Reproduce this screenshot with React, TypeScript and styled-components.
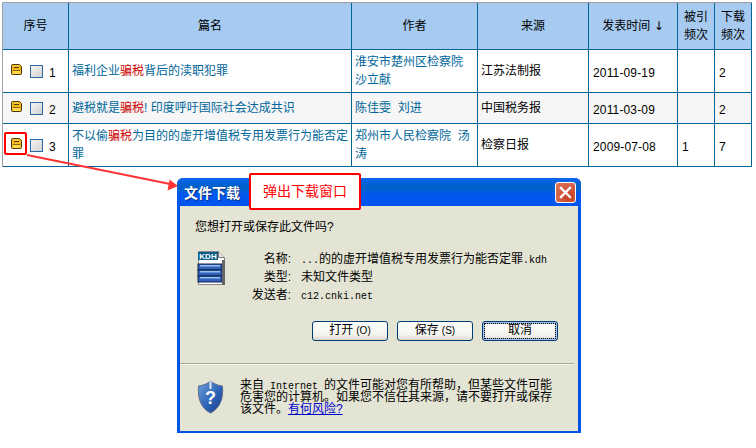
import styled, { createGlobalStyle } from "styled-components";

const GlobalStyle = createGlobalStyle`
  html, body {
    margin: 0;
    padding: 0;
    background: #fff;
  }
`;

const cjk = `"Liberation Sans", "Noto Sans CJK SC", sans-serif`;
const lineBlue = "#006699";

const Page = styled.div`
  position: relative;
  width: 756px;
  height: 448px;
  overflow: hidden;
  padding: 2px 0 0 2px;
  box-sizing: border-box;
  font-family: ${cjk};
  font-size: 12px;
  color: #000;
`;

const ResultTable = styled.table`
  width: 750px;
  table-layout: fixed;
  border-collapse: separate;
  border-spacing: 0;
  border-top: 1px solid #a0a0a0;
  border-left: 1px solid #a0a0a0;
`;

const HeadCell = styled.th`
  height: 46px;
  padding: 0 3px;
  background: #a6caf0;
  font-weight: normal;
  line-height: 18px;
  text-align: center;
  border-right: 1px solid ${lineBlue};
  border-bottom: 1px solid ${lineBlue};
`;

const SortArrow = styled.span`
  font-family: "DejaVu Sans", sans-serif;
  font-size: 12px;
`;

const Row = styled.tr<{ $shade?: boolean; $height: number }>`
  height: ${(p) => p.$height}px;
  background: ${(p) => (p.$shade ? "#f6f6f6" : "#fff")};
`;

const Cell = styled.td`
  padding: 0 2px 0 3px;
  line-height: 18px;
  vertical-align: middle;
  word-break: break-all;
  border-right: 1px solid ${lineBlue};
  border-bottom: 1px solid ${lineBlue};
`;

const TextLink = styled.a`
  color: ${lineBlue};
  text-decoration: none;
`;

const Hit = styled.em`
  color: #cc0000;
  font-style: normal;
`;

const NumCell = styled(Cell)`
  padding: 3px 0 0 4px;
  letter-spacing: 0.15px;
`;

const SeqBox = styled.div`
  display: flex;
  align-items: center;
  padding-left: 5px;
`;

const Floppy = styled.svg`
  display: block;
  width: 11px;
  height: 11px;
  margin-top: -3px;
  flex: none;
`;

const Check = styled.span`
  display: block;
  width: 11px;
  height: 11px;
  margin-left: 8px;
  border: 1px solid #2a6aa8;
  background: linear-gradient(135deg, #f6f6f6, #d0d0d0);
  flex: none;
`;

const SeqNum = styled.span`
  margin-left: 6px;
  padding-top: 3px;
`;

const Dialog = styled.div`
  width: 404px;
  height: 255px;
  margin: 11px 0 0 175px;
  box-sizing: border-box;
  display: flex;
  flex-direction: column;
  border-radius: 6px 6px 0 0;
  background: #0055e5;
  padding: 0 3px 2px;
`;

const TitleBar = styled.div`
  flex: none;
  height: 28px;
  margin: 0 -3px;
  padding: 0 5px 0 7px;
  display: flex;
  align-items: center;
  justify-content: space-between;
  border-radius: 6px 6px 0 0;
  background: linear-gradient(180deg, #0a66f0 0, #0a62e0 4px, #0060c8 8px, #0062d0 12px, #0058ee 16px, #0055ee 100%);
`;

const TitleText = styled.span`
  color: #fff;
  font-size: 14px;
  font-weight: bold;
  text-shadow: 1px 1px 0 #0a2a80;
`;

const CloseButton = styled.div`
  width: 19px;
  height: 19px;
  border: 1px solid #fff;
  border-radius: 3px;
  background: radial-gradient(circle at 70% 70%, #c23c1c, #d9694f 70%, #e27a60);
  display: flex;
  align-items: center;
  justify-content: center;
`;

const Body = styled.div`
  flex: 1;
  background: #e4e4d4;
  display: flex;
  flex-direction: column;
`;

const Prompt = styled.div`
  padding: 14px 0 0 15px;
  line-height: 14px;
`;

const Mono = styled.span`
  font-family: "Liberation Mono", monospace;
  font-size: 10px;
  line-height: 0;
`;

const FileBlock = styled.div`
  display: flex;
  padding: 17px 0 0 17px;
`;

const FileIcon = styled.svg`
  display: block;
  width: 29px;
  height: 34px;
  flex: none;
`;

const FieldGrid = styled.div`
  display: grid;
  grid-template-columns: 65px auto;
  grid-auto-rows: 18px;
  column-gap: 10px;
  margin: -1px 0 0 0;
  line-height: 18px;
`;

const FieldName = styled.span`
  text-align: right;
`;

const Buttons = styled.div`
  display: flex;
  gap: 9px;
  padding: 17px 0 0 132px;
`;

const Btn = styled.div<{ $focus?: boolean }>`
  position: relative;
  width: 76px;
  height: 20px;
  box-sizing: border-box;
  border: 1px solid #003c74;
  border-radius: 3px;
  background: linear-gradient(180deg, #fff, #f4f4ee 70%, #dcd8ce);
  text-align: center;
  line-height: 17px;
  box-shadow: ${(p) => (p.$focus ? "inset 0 0 0 2px #a4bfe8" : "none")};
  outline: ${(p) => (p.$focus ? "1px dotted #000" : "none")};
  outline-offset: ${(p) => (p.$focus ? "-3px" : "0")};
`;

const BtnKey = styled.span`
  margin-left: 3px;
  font-size: 10px;
`;

const Separator = styled.div`
  height: 1px;
  margin: 22px 4px 0 0;
  background: #a9a99c;
  border-bottom: 1px solid #f6f6ec;
`;

const Notice = styled.div`
  display: flex;
  padding: 15px 0 0 17px;
`;

const Shield = styled.svg`
  display: block;
  width: 27px;
  height: 34px;
  flex: none;
`;

const NoticeText = styled.div`
  width: 314px;
  margin: -1px 0 0 16px;
  line-height: 12px;
`;

const RiskLink = styled.a`
  color: #0000cc;
  text-decoration: underline;
`;

const Callout = styled.div`
  position: absolute;
  left: 249px;
  top: 173px;
  width: 108px;
  height: 33px;
  border: 2px solid #f00;
  border-radius: 2px;
  background: #fff;
  color: #f00;
  font-size: 14px;
  line-height: 33px;
  text-align: center;
`;

const Marker = styled.div`
  position: absolute;
  left: 4px;
  top: 132px;
  width: 19px;
  height: 19px;
  border: 2px solid #f00;
  border-radius: 2px;
`;

const Arrow = styled.svg`
  position: absolute;
  left: 0;
  top: 0;
  pointer-events: none;
`;

function FloppyIcon() {
  return (
    <Floppy viewBox="0 0 11 11">
      <path d="M1.5.5h7l2 2v7a1 1 0 0 1-1 1h-8a1 1 0 0 1-1-1v-8a1 1 0 0 1 1-1z" fill="#f5b71e" stroke="#4a3a06" />
      <rect x="3" y="1" width="5" height="2" fill="#f9c93a" />
      <rect x="3" y="3" width="5" height="1" fill="#4a3a06" />
      <rect x="2" y="6" width="7" height="1" fill="#8a6a00" />
      <rect x="2" y="7" width="7" height="3" fill="#ffd84f" />
    </Floppy>
  );
}

function KdhIcon() {
  return (
    <FileIcon viewBox="0 0 29 34">
      <path d="M1.5.5h20l6 6v27h-26z" fill="#fff" stroke="#888" />
      <path d="M21.5.5v6h6" fill="#e8e8e8" stroke="#777" />
      <rect x="1" y="1" width="20" height="8" fill="#0d5f8a" />
      <text x="11" y="8" fontFamily="Liberation Sans" fontSize="8" fontWeight="bold" fill="#fff" textAnchor="middle">
        KDH
      </text>
      {[13, 19, 25].map((y) => (
        <g key={y}>
          <rect x="1" y={y} width="24" height="6" fill="#2f62b8" stroke="#10224c" strokeWidth="1" />
          <rect x="3" y={y + 1} width="20" height="1.5" fill="#9cc0ee" />
        </g>
      ))}
      <rect x="25" y="9" width="3" height="25" fill="#666" />
    </FileIcon>
  );
}

function ShieldIcon() {
  return (
    <Shield viewBox="0 0 27 34">
      <defs>
        <linearGradient id="shieldFill" x1="0" y1="0" x2="1" y2="1">
          <stop offset="0" stopColor="#6f9fdc" />
          <stop offset="0.55" stopColor="#2f65b8" />
          <stop offset="1" stopColor="#1a3a84" />
        </linearGradient>
      </defs>
      <path d="M13.5 1C10 4 6 5.500 1.500 6c-1 12 2 22 12 27 10-5 13-15 12-27-4.500-.5-8.500-2-12-5z" fill="url(#shieldFill)" stroke="#5c6e8c" />
      <path d="M13.500 1v8" stroke="#dfe8f4" strokeWidth="2" />
      <text x="13.500" y="24" fontFamily="Liberation Sans" fontSize="18" fontWeight="bold" fill="#fff" textAnchor="middle">
        ?
      </text>
    </Shield>
  );
}

const rows = [
  {
    n: 1,
    height: 43,
    title: (
      <>
        福利企业<Hit>骗税</Hit>背后的渎职犯罪
      </>
    ),
    author: "淮安市楚州区检察院\u00a0 沙立献",
    source: "江苏法制报",
    date: "2011-09-19",
    cited: "",
    down: "2",
  },
  {
    n: 2,
    height: 31,
    shade: true,
    title: (
      <>
        避税就是<Hit>骗税</Hit>! 印度呼吁国际社会达成共识
      </>
    ),
    author: "陈佳雯\u00a0 刘进",
    source: "中国税务报",
    date: "2011-03-09",
    cited: "",
    down: "2",
  },
  {
    n: 3,
    height: 43,
    title: (
      <>
        不以偷<Hit>骗税</Hit>为目的的虚开增值税专用发票行为能否定罪
      </>
    ),
    author: "郑州市人民检察院\u00a0 汤涛",
    source: "检察日报",
    date: "2009-07-08",
    cited: "1",
    down: "7",
  },
];

export default function App() {
  return (
    <Page>
      <GlobalStyle />
      <ResultTable>
        <colgroup>
          <col style={{ width: 66 }} />
          <col style={{ width: 283 }} />
          <col style={{ width: 126 }} />
          <col style={{ width: 111 }} />
          <col style={{ width: 89 }} />
          <col style={{ width: 37 }} />
          <col style={{ width: 37 }} />
        </colgroup>
        <thead>
          <tr>
            <HeadCell>序号</HeadCell>
            <HeadCell>篇名</HeadCell>
            <HeadCell>作者</HeadCell>
            <HeadCell>来源</HeadCell>
            <HeadCell>
              发表时间 <SortArrow>↓</SortArrow>
            </HeadCell>
            <HeadCell>被引频次</HeadCell>
            <HeadCell>下载频次</HeadCell>
          </tr>
        </thead>
        <tbody>
          {rows.map((r) => (
            <Row key={r.n} $height={r.height} $shade={r.shade}>
              <Cell>
                <SeqBox>
                  <FloppyIcon />
                  <Check />
                  <SeqNum>{r.n}</SeqNum>
                </SeqBox>
              </Cell>
              <Cell>
                <TextLink>{r.title}</TextLink>
              </Cell>
              <Cell>
                <TextLink>{r.author}</TextLink>
              </Cell>
              <Cell>{r.source}</Cell>
              <NumCell>{r.date}</NumCell>
              <NumCell>{r.cited}</NumCell>
              <NumCell>{r.down}</NumCell>
            </Row>
          ))}
        </tbody>
      </ResultTable>

      <Dialog>
        <TitleBar>
          <TitleText>文件下载</TitleText>
          <CloseButton>
            <svg width="13" height="13" viewBox="0 0 13 13">
              <path d="M2 2l9 9M11 2l-9 9" stroke="#fff" strokeWidth="2.400" strokeLinecap="square" />
            </svg>
          </CloseButton>
        </TitleBar>
        <Body>
          <Prompt>您想打开或保存此文件吗?</Prompt>
          <FileBlock>
            <KdhIcon />
            <FieldGrid>
              <FieldName>名称:</FieldName>
              <span>
                <Mono>...</Mono>的的虚开增值税专用发票行为能否定罪<Mono>.kdh</Mono>
              </span>
              <FieldName>类型:</FieldName>
              <span>未知文件类型</span>
              <FieldName>发送者:</FieldName>
              <span>
                <Mono>c12.cnki.net</Mono>
              </span>
            </FieldGrid>
          </FileBlock>
          <Buttons>
            <Btn>
              打开<BtnKey>(O)</BtnKey>
            </Btn>
            <Btn>
              保存<BtnKey>(S)</BtnKey>
            </Btn>
            <Btn $focus>取消</Btn>
          </Buttons>
          <Separator />
          <Notice>
            <ShieldIcon />
            <NoticeText>
              来自<Mono> Internet </Mono>的文件可能对您有所帮助，但某些文件可能危害您的计算机。如果您不信任其来源，请不要打开或保存该文件。
              <RiskLink>有何风险?</RiskLink>
            </NoticeText>
          </Notice>
        </Body>
      </Dialog>

      <Arrow width="756" height="448" viewBox="0 0 756 448">
        <path d="M27 155L170 184" stroke="#f33" strokeWidth="2" fill="none" />
        <path d="M178 186l-10.500 4.500 2-11z" fill="#f33" />
      </Arrow>
      <Marker />
      <Callout>弹出下载窗口</Callout>
    </Page>
  );
}
